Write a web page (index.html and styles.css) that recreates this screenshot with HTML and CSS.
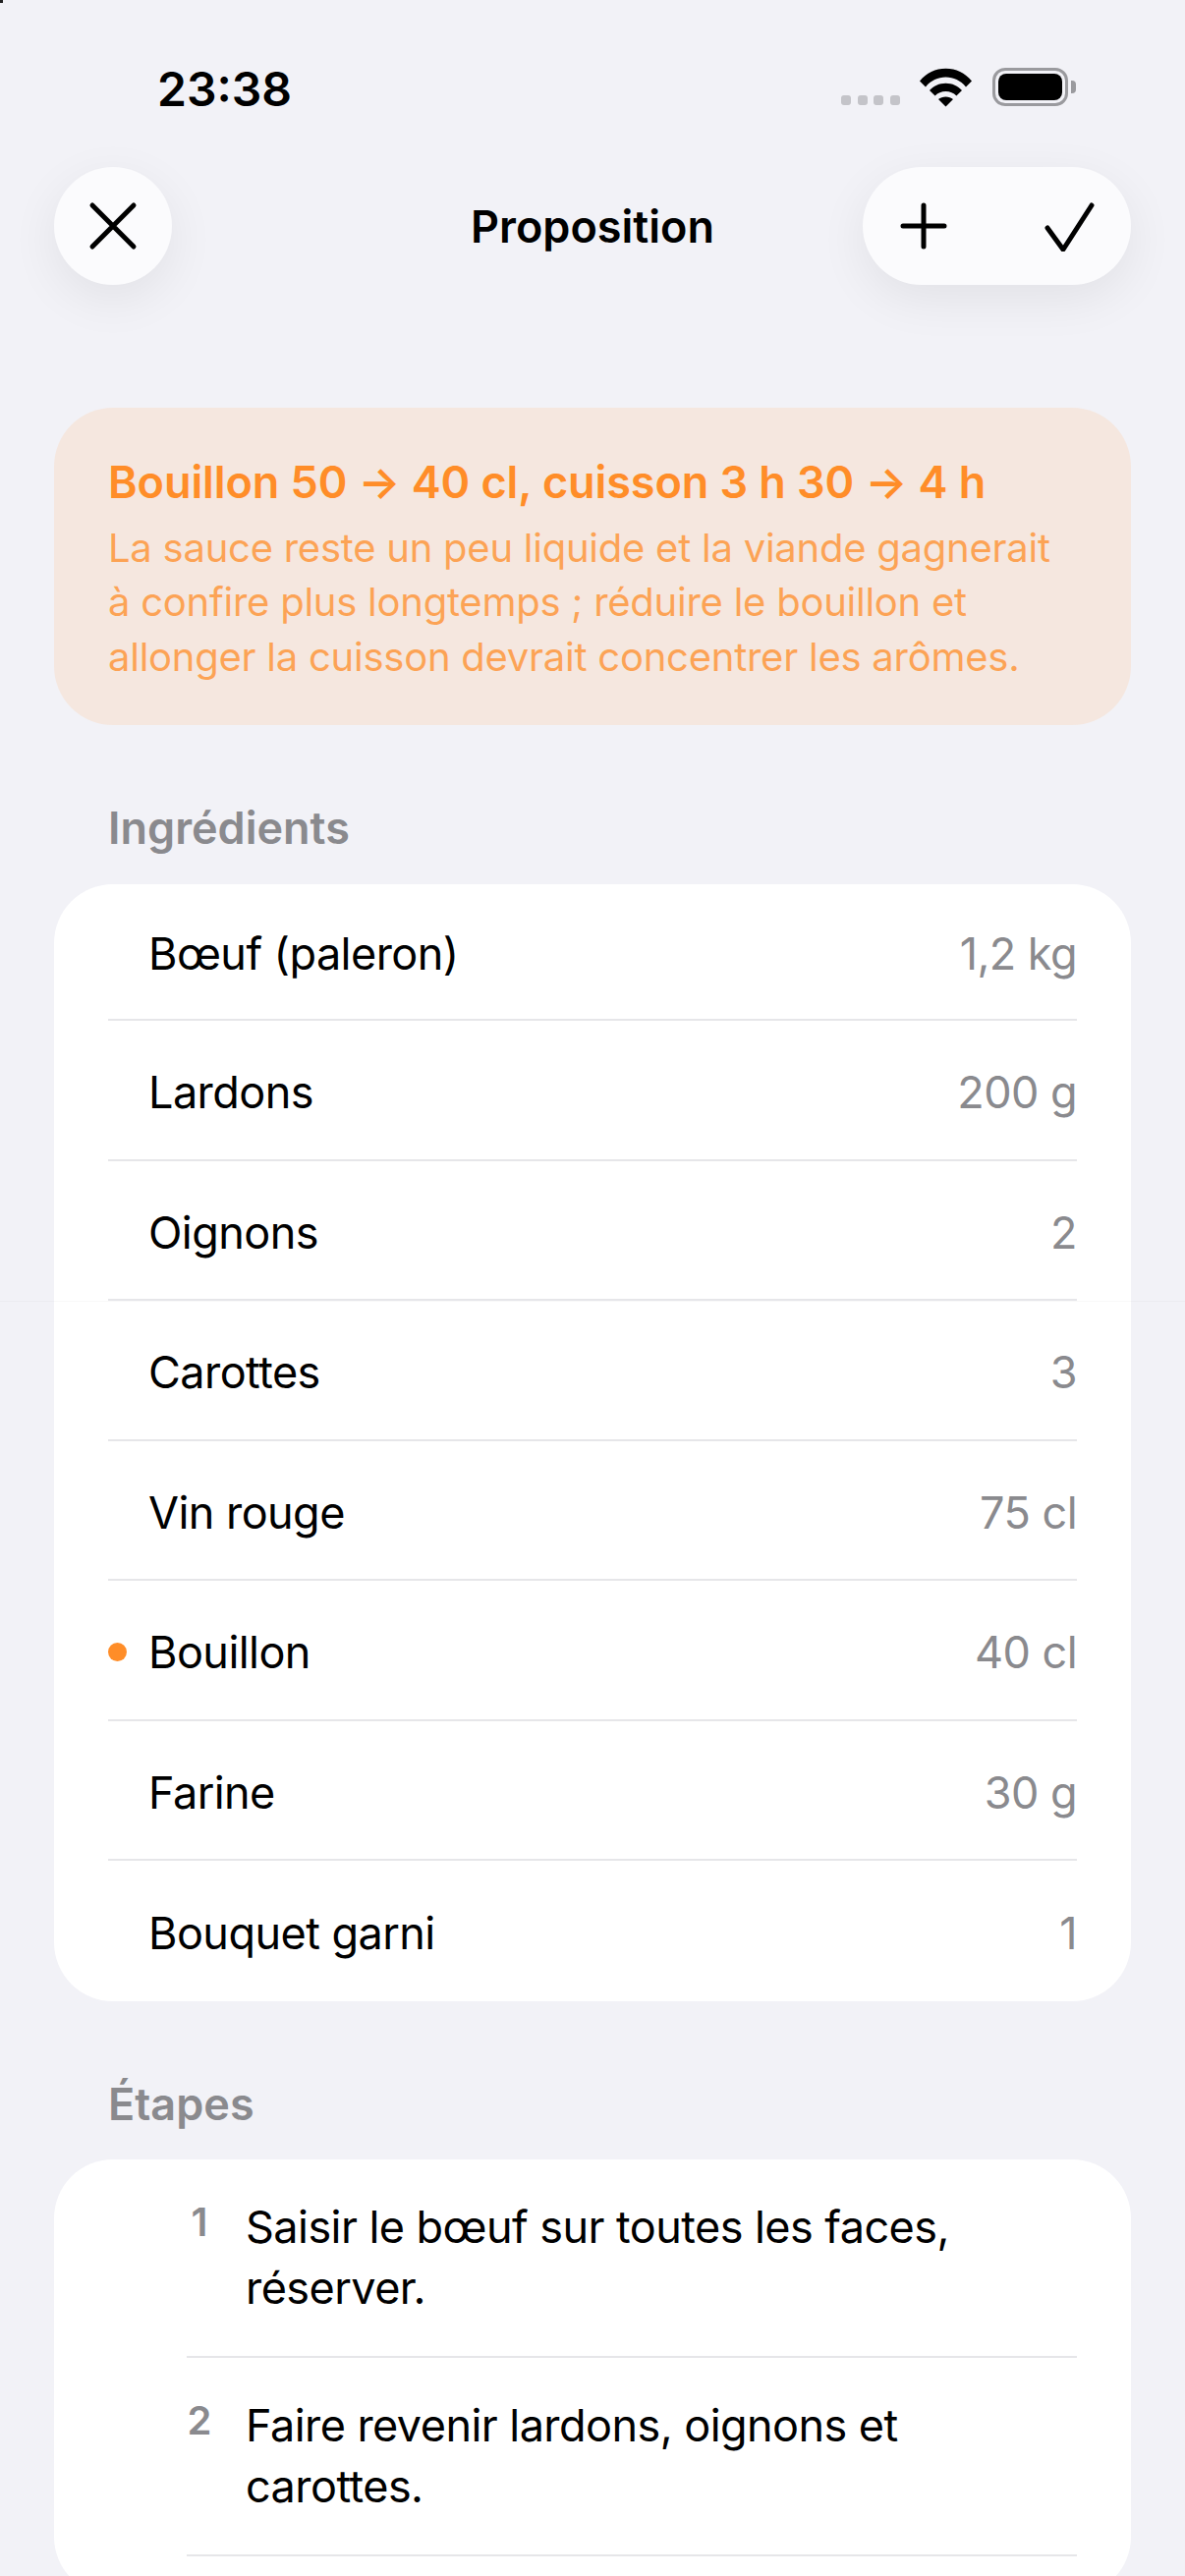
FILE: index.html
```html
<!DOCTYPE html>
<html lang="fr">
<head>
<meta charset="utf-8">
<title>Proposition</title>
<link rel="stylesheet" href="styles.css">
</head>
<body>
<div class="screen">
  <header class="status">
    <span class="time">23:38</span>
    <div class="status-icons">
      <div class="signal"><i></i><i></i><i></i><i></i></div>
      <svg class="wifi" width="54" height="40" viewBox="0 0 54 40"><path d="M0 13.5 C7 5 16 0.8 26.5 0.8 C37 0.8 46 5 53 13.5 L47 19.5 C41.5 13 34.5 9.6 26.5 9.6 C18.5 9.6 11.5 13 6 19.5 Z M10 23 C14 18.6 20 15.8 26.5 15.8 C33 15.8 39 18.6 43 23 L37.4 28.6 C34.5 25.6 30.8 24 26.5 24 C22.2 24 18.5 25.6 15.6 28.6 Z M19 32 C21 30.2 23.6 29.4 26.5 29.4 C29.4 29.4 32 30.2 34 32 L26.5 39.5 Z" fill="#000"/></svg>
      <div class="battery"><div class="battery-fill"></div></div>
    </div>
  </header>

  <nav class="toolbar">
    <button class="glass round">
      <svg width="52" height="52" viewBox="0 0 52 52"><path d="M5 5 L47 47 M47 5 L5 47" stroke="#000" stroke-width="5" stroke-linecap="round" fill="none"/></svg>
    </button>
    <h1 class="nav-title">Proposition</h1>
    <div class="glass pill">
      <svg width="52" height="52" viewBox="0 0 52 52"><path d="M26 5 V47 M5 26 H47" stroke="#000" stroke-width="5" stroke-linecap="round" fill="none"/></svg>
      <svg width="52" height="52" viewBox="0 0 52 52"><path d="M4 28 L20 50 L49 5" stroke="#000" stroke-width="5" stroke-linecap="round" stroke-linejoin="round" fill="none"/></svg>
    </div>
  </nav>

  <main class="content">
    <section class="notice">
      <h2 class="notice-title">Bouillon 50 → 40 cl, cuisson 3 h 30 → 4 h</h2>
      <p class="notice-text">La sauce reste un peu liquide et la viande gagnerait à confire plus longtemps ; réduire le bouillon et allonger la cuisson devrait concentrer les arômes.</p>
    </section>

    <h3 class="section-label">Ingrédients</h3>
    <ul class="card">
      <li class="row"><span class="name">Bœuf (paleron)</span><span class="qty">1,2 kg</span></li>
      <li class="row"><span class="name">Lardons</span><span class="qty">200 g</span></li>
      <li class="row"><span class="name">Oignons</span><span class="qty">2</span></li>
      <li class="row"><span class="name">Carottes</span><span class="qty">3</span></li>
      <li class="row"><span class="name">Vin rouge</span><span class="qty">75 cl</span></li>
      <li class="row changed"><span class="name">Bouillon</span><span class="qty">40 cl</span></li>
      <li class="row"><span class="name">Farine</span><span class="qty">30 g</span></li>
      <li class="row"><span class="name">Bouquet garni</span><span class="qty">1</span></li>
    </ul>

    <h3 class="section-label steps-label">Étapes</h3>
    <ol class="card steps">
      <li class="step"><span class="num">1</span><p class="step-text">Saisir le bœuf sur toutes les faces, réserver.</p></li>
      <li class="step"><span class="num">2</span><p class="step-text">Faire revenir lardons, oignons et carottes.</p></li>
    </ol>
  </main>
  <div class="scroll-edge"></div>
  <div class="corner-mark"></div>
</div>
</body>
</html>
```

FILE: styles.css
```css
* { box-sizing: border-box; margin: 0; padding: 0; }
html, body { width: 1206px; height: 2622px; overflow: hidden; background: #f2f2f7; }
body { font-family: Inter, "Liberation Sans", sans-serif; color: #000; }
.screen { position: relative; width: 1206px; height: 2622px; overflow: hidden; }
.corner-mark { position: absolute; left: 0; top: 0; width: 3px; height: 3px; background: #222; }

.status { height: 170px; padding: 63px 119px 0 160px; display: flex; justify-content: space-between; align-items: flex-start; }
.time { font-size: 48px; line-height: 56px; font-weight: 600; }
.status-icons { display: flex; align-items: flex-start; margin-top: -1px; }
.signal { display: flex; gap: 6.6px; margin-top: 35px; margin-right: 20px; }
.signal i { width: 10px; height: 10px; border-radius: 3px; background: #c4c4c9; }
.wifi { margin-top: 7px; margin-right: 20px; }
.battery { position: relative; width: 77px; height: 39px; margin-top: 7px; border: 3px solid #9a9a9e; border-radius: 13px; padding: 3px; }
.battery::after { content: ""; position: absolute; right: -11px; top: 10px; width: 5px; height: 13px; border-radius: 0 4px 4px 0; background: #9a9a9e; }
.battery-fill { width: 100%; height: 100%; background: #000; border-radius: 8px; }

.toolbar { height: 120px; padding: 0 55px; display: flex; justify-content: space-between; align-items: center; position: relative; }
.glass { background: #fbfbfd; box-shadow: 0 14px 50px rgba(0,0,0,0.07); border: 0; display: flex; align-items: center; }
.round { width: 120px; height: 120px; border-radius: 60px; justify-content: center; }
.pill { width: 273px; height: 120px; border-radius: 60px; padding: 0 37px 0 36px; justify-content: space-between; }
.nav-title { position: absolute; left: 0; right: 0; padding-top: 2px; text-align: center; font-size: 45px; line-height: 56px; font-weight: 600; }

.content { padding: 125px 55px 0; }
.notice { height: 323px; border-radius: 60px; background: #f5e7df; padding: 49px 55px 0; }
.notice-title { font-size: 45px; line-height: 54px; font-weight: 600; color: #ff8d28; letter-spacing: -0.08px; }
.notice-text { margin-top: 12px; font-size: 40px; line-height: 55.4px; color: rgba(255,141,40,0.75); font-weight: 400; letter-spacing: -0.25px; }

.section-label { font-size: 45px; line-height: 54px; font-weight: 600; color: #8a8a8e; padding-left: 55px; margin-top: 78px; }
.card { list-style: none; background: #fff; border-radius: 60px; margin-top: 30px; }
.row { position: relative; height: 142.5px; margin: 0 55px; padding: 5px 0 0 41px; display: flex; justify-content: space-between; align-items: center; font-size: 45px; letter-spacing: -0.55px; border-bottom: 2px solid #e6e6e9; }
.row:first-child { height: 139px; padding-top: 3px; }
.row:last-child { border-bottom: 0; }
.qty { color: #8a8a8e; }
.changed::before { content: ""; position: absolute; left: 0; top: 50%; width: 19px; height: 19px; margin-top: -7px; border-radius: 50%; background: #ff8d28; }

.steps-label { margin-top: 78px; }
.steps { padding-bottom: 40px; margin-top: 29px; }
.step { margin-left: 135px; margin-right: 55px; padding: 38.5px 0; display: flex; border-bottom: 2px solid #e6e6e9; }
.num { width: 60px; padding-right: 34px; font-size: 40px; line-height: 50px; margin-top: 1px; font-weight: 600; color: #8a8a8e; text-align: center; }
.step-text { flex: 1; font-size: 45px; line-height: 61.5px; letter-spacing: -0.55px; }

.scroll-edge { position: absolute; left: 0; right: 0; top: 1324px; height: 1px; background: rgba(0,0,0,0.025); }
```
